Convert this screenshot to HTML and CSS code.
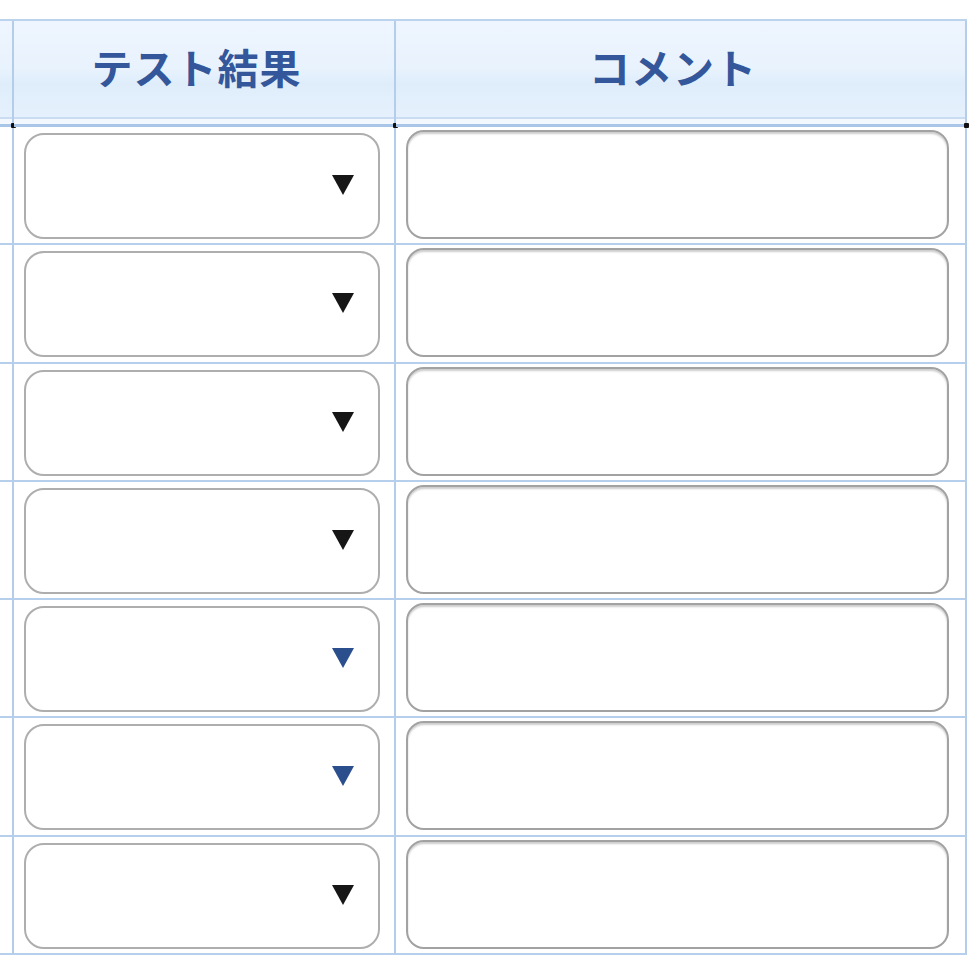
FILE: index.html
```html
<!DOCTYPE html>
<html lang="ja">
<head>
    <meta charset="UTF-8">
    <meta name="viewport" content="width=device-width, initial-scale=1.0">
    <title>テスト結果</title>
    <link rel="stylesheet" href="styles.css">
</head>
<body>
    <table class="grid">
        <colgroup>
            <col class="col-prev">
            <col class="col-result">
            <col class="col-comment">
        </colgroup>
        <thead>
            <tr>
                <th class="prev"></th>
                <th>テスト結果</th>
                <th>コメント</th>
            </tr>
        </thead>
        <tbody>
            <tr>
                <td class="prev"></td>
                <td><div class="sel"><select></select><span class="arrow"></span></div></td>
                <td><input class="txt" type="text"></td>
            </tr>
            <tr>
                <td class="prev"></td>
                <td><div class="sel"><select></select><span class="arrow"></span></div></td>
                <td><input class="txt" type="text"></td>
            </tr>
            <tr>
                <td class="prev"></td>
                <td><div class="sel"><select></select><span class="arrow"></span></div></td>
                <td><input class="txt" type="text"></td>
            </tr>
            <tr>
                <td class="prev"></td>
                <td><div class="sel"><select></select><span class="arrow"></span></div></td>
                <td><input class="txt" type="text"></td>
            </tr>
            <tr>
                <td class="prev"></td>
                <td><div class="sel"><select></select><span class="arrow blue"></span></div></td>
                <td><input class="txt" type="text"></td>
            </tr>
            <tr>
                <td class="prev"></td>
                <td><div class="sel"><select></select><span class="arrow blue"></span></div></td>
                <td><input class="txt" type="text"></td>
            </tr>
            <tr>
                <td class="prev"></td>
                <td><div class="sel"><select></select><span class="arrow"></span></div></td>
                <td><input class="txt" type="text"></td>
            </tr>
        </tbody>
    </table>
</body>
</html>
```

FILE: styles.css
```css
*{ margin: 0; padding: 0; box-sizing: border-box;}
body{ background: #fff; font-family: "Noto Sans CJK JP", "Noto Sans", sans-serif; overflow: hidden;}

.grid{ margin-top: 19px; width: 967px; table-layout: fixed; border-collapse: separate; border-spacing: 0; border-top: 2px solid #bcd3ee;}
.col-prev{ width: 14px;}
.col-result{ width: 382px;}
.col-comment{ width: 571px;}

.grid th, .grid td{ border-right: 2.5px solid #b3cdeb; padding: 0;}

.grid th{ position: relative; height: 106px; border-bottom: 3px solid #a9c5e7;
    background: linear-gradient(#eef5fe 0%, #e9f3fd 45%, #dfedfb 60%, #e6f1fc 100%);
    box-shadow: inset 0 -5px 0 #f3f8fe, inset 0 -7px 0 #c9dcf2;
    color: #33579a; font-size: 41px; font-weight: 700; letter-spacing: 1px; line-height: 1; padding: 0 15px 12px 0;}
.grid th.prev{ padding: 0;}
.grid th::after{ content: ""; position: absolute; right: -4px; bottom: -4px; width: 5px; height: 5px; background: #111; border-radius: 1px;}

.grid td{ height: 118.3px; border-bottom: 2px solid #b6cfec; vertical-align: top;}

.sel{ position: relative; margin: 6px 0 0 10px; width: 356px; height: 106px;}
.sel select{ appearance: none; -webkit-appearance: none; display: block; width: 100%; height: 100%;
    background: #fff; border: 2.5px solid #aeaeae; border-radius: 20px; outline: none;}
.arrow{ position: absolute; right: 26px; top: 42px; width: 0; height: 0;
    border-left: 11px solid transparent; border-right: 11px solid transparent; border-top: 20px solid #161616; pointer-events: none;}
.arrow.blue{ border-top-color: #2b4f8c;}

.txt{ display: block; margin: 3px 0 0 10px; width: 543px; height: 109px; background: #fff;
    border: 2.5px solid #a2a2a2; border-radius: 18px; outline: none;
    box-shadow: inset 0 2px 2px rgba(0,0,0,.2);}
```
